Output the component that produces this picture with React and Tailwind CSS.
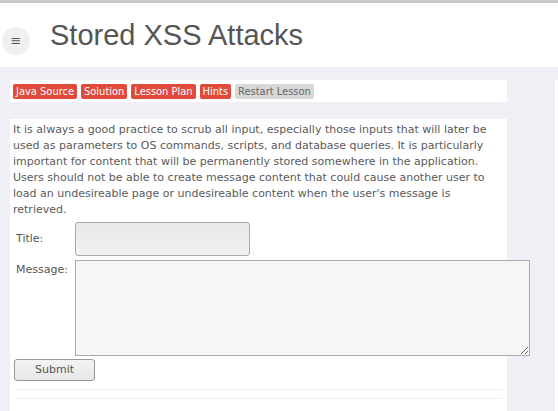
import React from 'react';

const lessonButtons = ['Java Source', 'Solution', 'Lesson Plan', 'Hints'];

function App() {
  return (
    <div className="w-[558px] h-[411px] overflow-hidden bg-[#efeff5] text-[#555] font-['DejaVu_Sans',sans-serif]">
      {/* Header */}
      <div className="border-t-[3px] border-[#c8c8c8] bg-white h-[67px] flex items-center">
        <div className="ml-[2px] mt-[12px] w-[28px] h-[28px] rounded-full bg-[#f0f0f0] flex items-center justify-center text-[13px] text-[#555] shrink-0">
          ≡
        </div>
        <h1 className="ml-[20px] mt-[1px] font-['Liberation_Sans',sans-serif] text-[29px] text-[#555]">
          Stored XSS Attacks
        </h1>
      </div>

      <div className="flex">
        <div className="w-[497px] ml-[10px] shrink-0">
          {/* Lesson buttons */}
          <div className="mt-[13px] bg-white h-[22px] flex items-center gap-[4px] pl-[3px]">
            {lessonButtons.map((label) => (
              <span
                key={label}
                className="bg-[#e04a3b] text-white rounded-[2px] px-[3px] h-[15px] leading-[15px] text-[11px] font-['DejaVu_Sans_Condensed',sans-serif]"
              >
                {label}
              </span>
            ))}
            <span className="bg-[#d8d8d8] text-[#666] rounded-[2px] px-[3px] h-[15px] leading-[15px] text-[11px] font-['DejaVu_Sans_Condensed',sans-serif]">
              Restart Lesson
            </span>
          </div>

          {/* Lesson content */}
          <div className="mt-[17px] bg-white h-[300px] pl-[3px] pt-[3px]">
            <p className="text-[11px] leading-[16px] w-[492px] text-[#5a5a5a]">
              It is always a good practice to scrub all input, especially those inputs that will later be used as parameters to OS commands, scripts, and database queries. It is particularly important for content that will be permanently stored somewhere in the application. Users should not be able to create message content that could cause another user to load an undesireable page or undesireable content when the user's message is retrieved.
            </p>

            <div className="mt-[4px] flex items-center">
              <label className="w-[62px] shrink-0 pl-[3px] text-[11px]">Title:</label>
              <input
                type="text"
                className="w-[175px] shrink-0 h-[34px] rounded-[3px] border border-[#aaa] bg-gradient-to-b from-[#e8e8e8] to-[#f2f2f2]"
              />
            </div>

            <div className="mt-[4px] flex items-start">
              <label className="w-[62px] shrink-0 pl-[3px] pt-[2px] text-[11px]">Message:</label>
              <textarea className="w-[455px] shrink-0 h-[96px] border border-[#aaa] bg-[#f6f6f6] resize" />
            </div>

            <button className="mt-[1px] ml-[1px] w-[81px] h-[22px] rounded-[3px] border border-[#999] bg-gradient-to-b from-[#f4f4f4] to-[#e6e6e6] text-[11px] text-[#555]">
              Submit
            </button>

            <div className="mt-[8px] ml-[2px] mr-[5px] border-t border-[#eee]" />
            <div className="mt-[8px] ml-[2px] mr-[5px] border-t border-[#eee]" />
          </div>
        </div>
        <div className="ml-auto w-[3px] bg-white h-[400px] mt-[13px]" />
      </div>
    </div>
  );
}

export default App;
